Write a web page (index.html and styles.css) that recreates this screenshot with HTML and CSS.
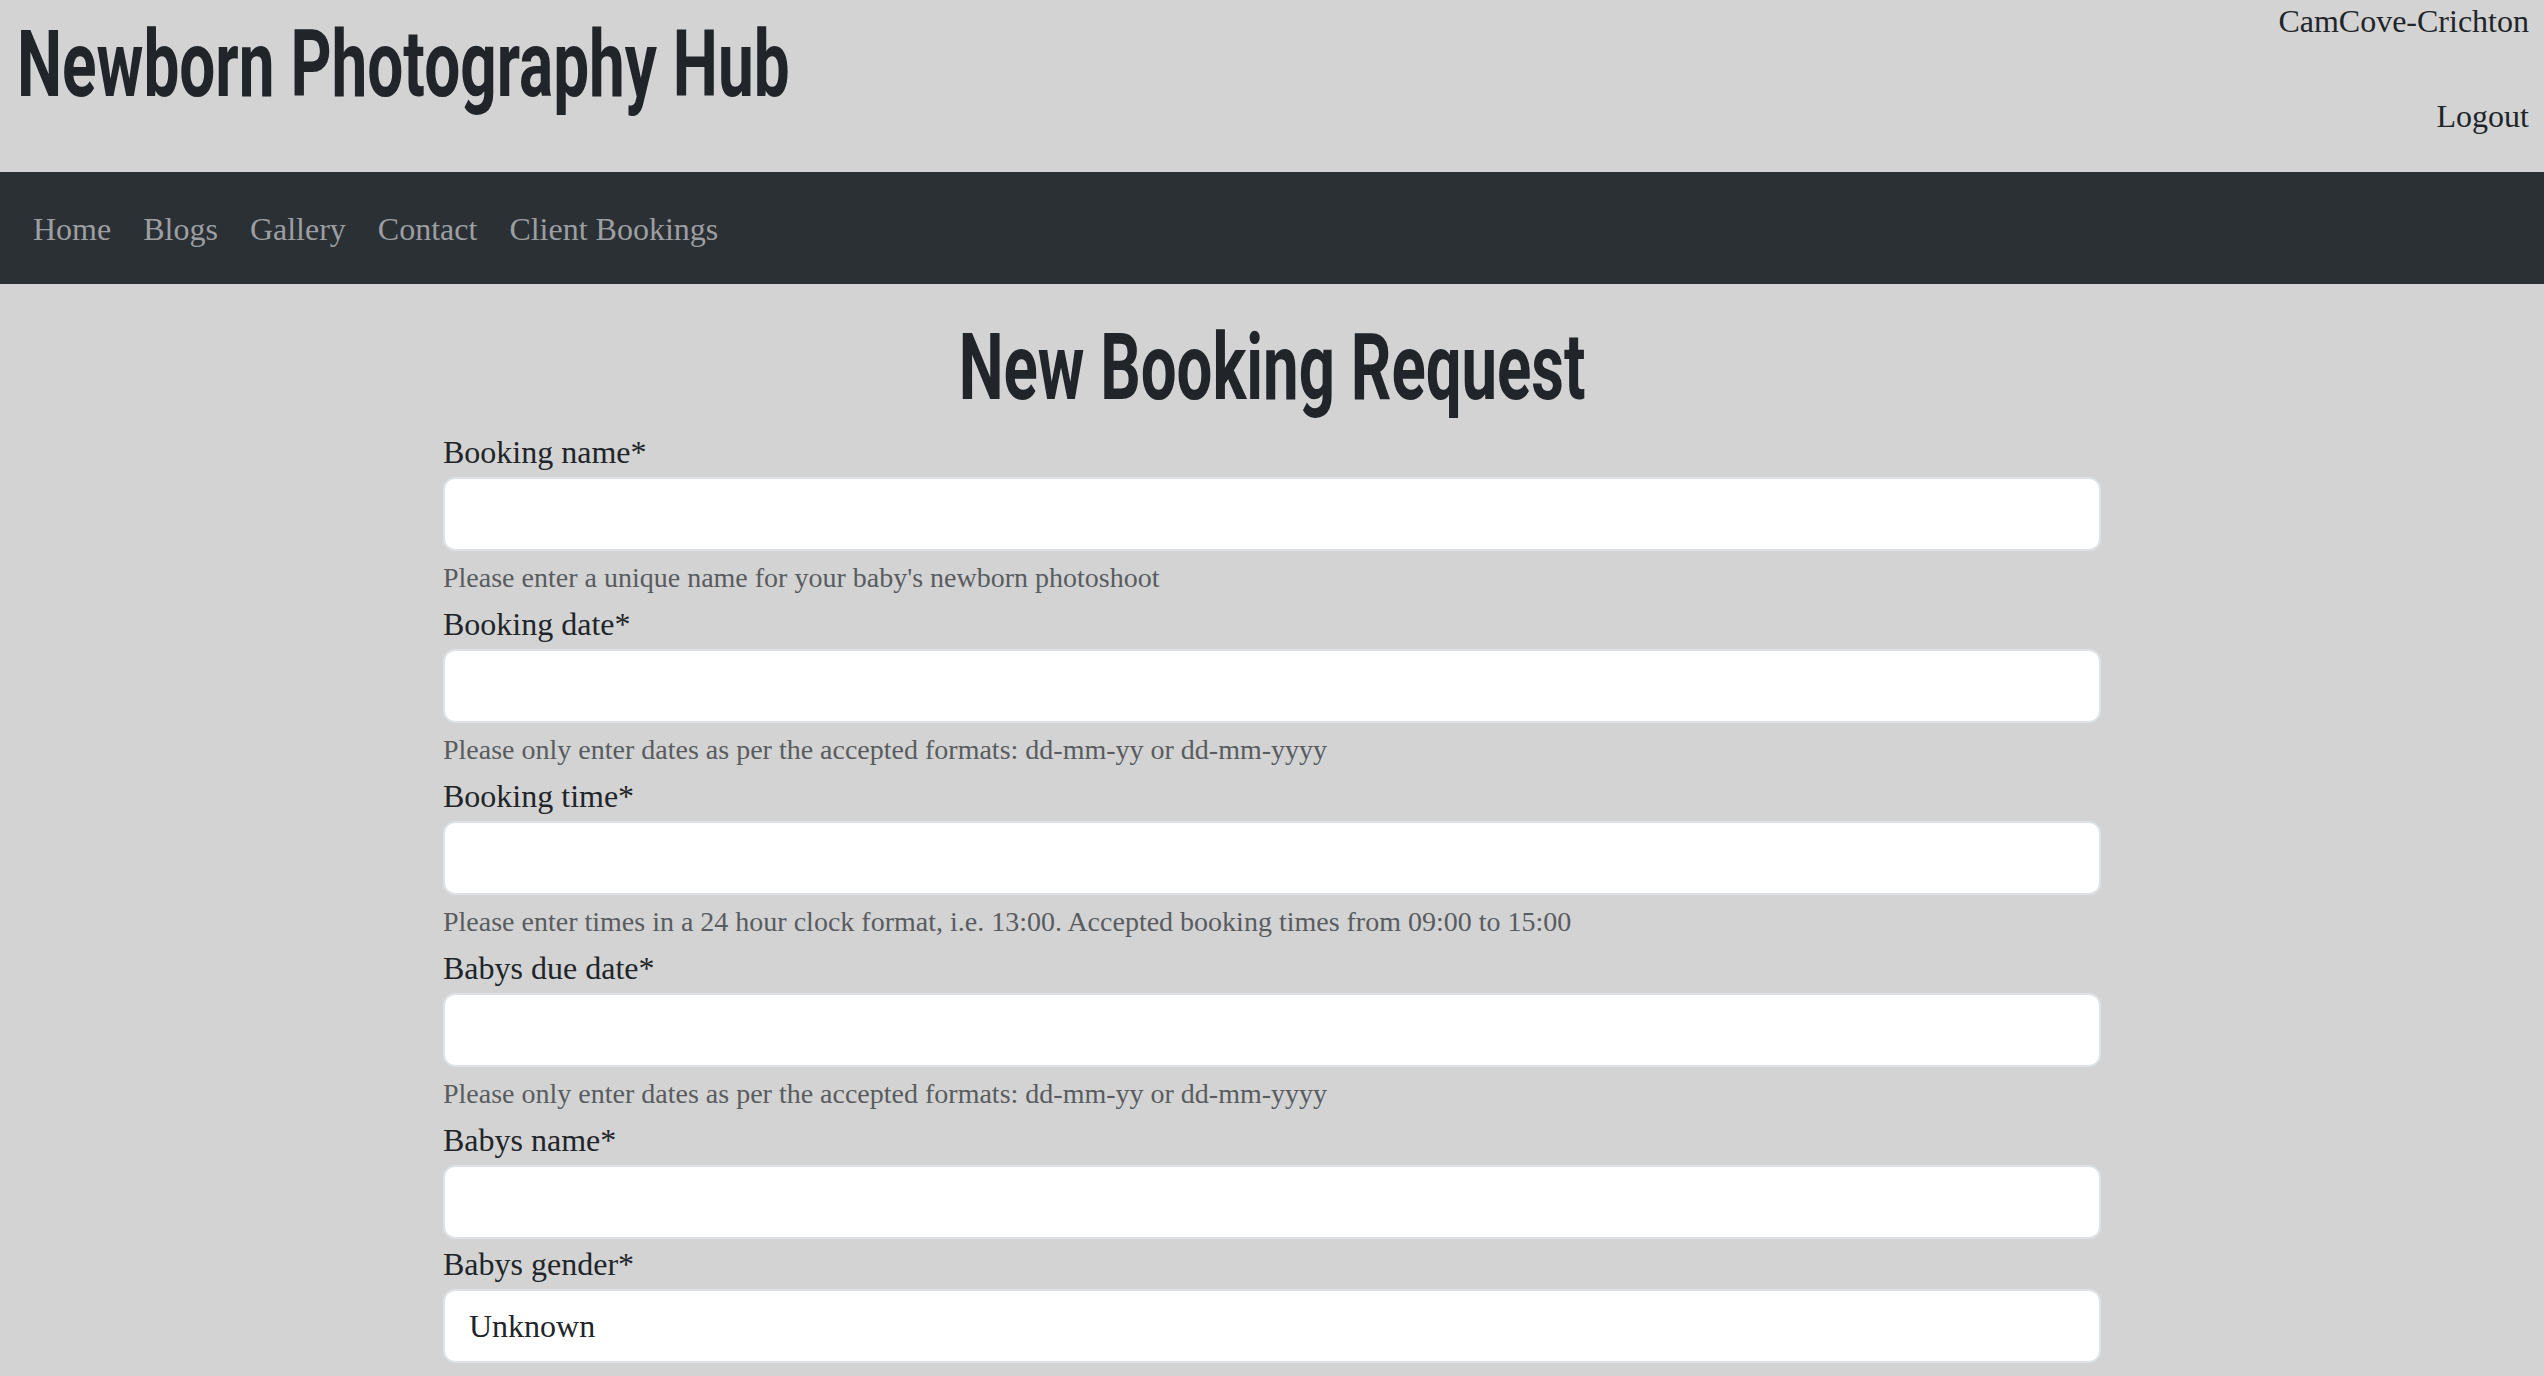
FILE: index.html
```html
<!DOCTYPE html>
<html lang="en">
<head>
<meta charset="utf-8">
<title>New Booking Request | Newborn Photography Hub</title>
<link rel="stylesheet" href="styles.css">
</head>
<body>
<header class="site-header">
  <h1 class="brand"><span class="condensed brand-text">Newborn Photography Hub</span></h1>
  <div class="user-links">
    <span class="user-name">CamCove-Crichton</span>
    <a class="user-logout" href="#">Logout</a>
  </div>
</header>
<nav class="main-nav">
  <a class="nav-link" href="#">Home</a>
  <a class="nav-link" href="#">Blogs</a>
  <a class="nav-link" href="#">Gallery</a>
  <a class="nav-link" href="#">Contact</a>
  <a class="nav-link" href="#">Client Bookings</a>
</nav>
<main class="page">
  <h2 class="page-title"><span class="condensed title-text">New Booking Request</span></h2>
  <form class="booking-form">
    <div class="field">
      <label class="field-label" for="booking_name">Booking name*</label>
      <input class="field-input" id="booking_name" type="text">
      <div class="field-help">Please enter a unique name for your baby's newborn photoshoot</div>
    </div>
    <div class="field">
      <label class="field-label" for="booking_date">Booking date*</label>
      <input class="field-input" id="booking_date" type="text">
      <div class="field-help">Please only enter dates as per the accepted formats: dd-mm-yy or dd-mm-yyyy</div>
    </div>
    <div class="field">
      <label class="field-label" for="booking_time">Booking time*</label>
      <input class="field-input" id="booking_time" type="text">
      <div class="field-help">Please enter times in a 24 hour clock format, i.e. 13:00. Accepted booking times from 09:00 to 15:00</div>
    </div>
    <div class="field">
      <label class="field-label" for="due_date">Babys due date*</label>
      <input class="field-input" id="due_date" type="text">
      <div class="field-help">Please only enter dates as per the accepted formats: dd-mm-yy or dd-mm-yyyy</div>
    </div>
    <div class="field field-plain">
      <label class="field-label" for="baby_name">Babys name*</label>
      <input class="field-input" id="baby_name" type="text">
    </div>
    <div class="field field-plain">
      <label class="field-label" for="baby_gender">Babys gender*</label>
      <select class="field-input field-select" id="baby_gender">
        <option>Unknown</option>
        <option>Boy</option>
        <option>Girl</option>
      </select>
    </div>
  </form>
</main>
</body>
</html>
```
FILE: styles.css
```css
html, body {
  margin: 0;
  padding: 0;
}

body {
  background: #d3d3d3;
  color: #212529;
  font-family: "Liberation Serif", "Times New Roman", serif;
  font-size: 32px;
  line-height: 48px;
  height: 1376px;
  overflow: hidden;
}

.site-header {
  height: 172px;
  display: flex;
  justify-content: space-between;
  align-items: flex-start;
  padding: 0 15px 0 17px;
  box-sizing: border-box;
}

.brand,
.page-title {
  font-family: "Roboto", "Liberation Sans", sans-serif;
  font-weight: 700;
  font-size: 92px;
  line-height: 96px;
  color: #212529;
  margin: 0;
  white-space: nowrap;
}

.condensed {
  display: inline-block;
}

.brand-text {
  transform: scaleX(0.694);
  transform-origin: left center;
}

.title-text {
  transform: scaleX(0.69);
  transform-origin: center center;
}

.brand {
  margin-top: 17px;
}

.user-links {
  display: flex;
  flex-direction: column;
  align-items: flex-end;
  gap: 57px;
  padding-top: 2px;
  line-height: 38px;
}

.user-name,
.user-logout {
  color: #212529;
  text-decoration: none;
}

.main-nav {
  background: #2b3035;
  height: 112px;
  box-sizing: border-box;
  padding: 33px 0 31px 17px;
  display: flex;
}

.nav-link {
  color: #9c9fa2;
  text-decoration: none;
  padding: 0 16px;
}

.page {
  width: 1658px;
  margin: 0 auto;
}

.page-title {
  text-align: center;
  margin-top: 36px;
  margin-bottom: 12px;
}

.booking-form {
  display: flex;
  flex-direction: column;
}

.field {
  display: flex;
  flex-direction: column;
  margin-bottom: 1px;
}

.field-label {
  display: block;
  margin-bottom: 1px;
}

.field-input {
  display: block;
  box-sizing: border-box;
  width: 100%;
  height: 74px;
  padding: 11px 24px;
  border: 2px solid #dee2e6;
  border-radius: 12px;
  background: #fff;
  color: #212529;
  font-family: "Liberation Serif", "Times New Roman", serif;
  font-size: 32px;
  line-height: 48px;
  margin: 0;
}

.field-select {
  appearance: none;
  -webkit-appearance: none;
}

.field-help {
  margin-top: 6px;
  font-size: 28px;
  line-height: 42px;
  color: #595c5f;
}

.field-plain {
  margin-bottom: 1px;
}
```
